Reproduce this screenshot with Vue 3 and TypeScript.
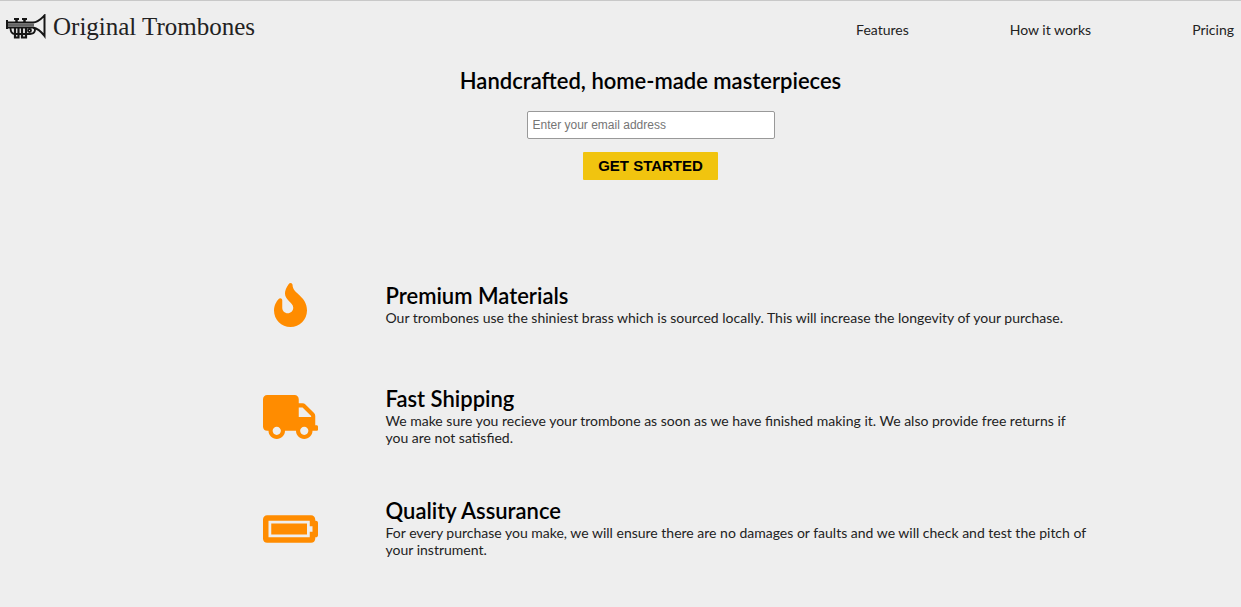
<script setup lang="ts">
import { ref } from 'vue'

interface Feature {
  title: string
  text: string
  viewBox: string
  path: string
}

const email = ref('')

const links: { label: string; href: string }[] = [
  { label: 'Features', href: '#features' },
  { label: 'How it works', href: '#how-it-works' },
  { label: 'Pricing', href: '#pricing' },
]

const features: Feature[] = [
  {
    title: 'Premium Materials',
    text: 'Our trombones use the shiniest brass which is sourced locally. This will increase the longevity of your purchase.',
    viewBox: '0 0 384 512',
    path: 'M216 23.86c0-23.8-30.65-32.77-44.15-13.04C48 191.85 224 200 224 288c0 35.63-29.11 64.46-64.85 63.99-35.17-.45-63.15-29.77-63.15-64.94v-85.51c0-21.7-26.47-32.23-41.43-16.5C27.8 213.16 0 261.33 0 320c0 105.87 86.13 192 192 192s192-86.13 192-192c0-170.29-168-193-168-296.14z',
  },
  {
    title: 'Fast Shipping',
    text: 'We make sure you recieve your trombone as soon as we have finished making it. We also provide free returns if you are not satisfied.',
    viewBox: '0 0 640 512',
    path: 'M624 352h-16V243.9c0-12.7-5.1-24.9-14.1-33.9L494 110.1c-9-9-21.2-14.1-33.9-14.1H416V48c0-26.5-21.5-48-48-48H48C21.5 0 0 21.5 0 48v320c0 26.5 21.5 48 48 48h16c0 53 43 96 96 96s96-43 96-96h128c0 53 43 96 96 96s96-43 96-96h48c8.8 0 16-7.2 16-16v-32c0-8.8-7.2-16-16-16zM160 464c-26.5 0-48-21.5-48-48s21.5-48 48-48 48 21.5 48 48-21.5 48-48 48zm320 0c-26.5 0-48-21.5-48-48s21.5-48 48-48 48 21.5 48 48-21.5 48-48 48zm80-208H416V144h44.1l99.9 99.9V256z',
  },
  {
    title: 'Quality Assurance',
    text: 'For every purchase you make, we will ensure there are no damages or faults and we will check and test the pitch of your instrument.',
    viewBox: '0 0 640 512',
    path: 'M544 160v64h32v64h-32v64H64V160h480m16-64H48c-26.51 0-48 21.49-48 48v224c0 26.51 21.49 48 48 48h512c26.51 0 48-21.49 48-48v-16h8c13.255 0 24-10.745 24-24V184c0-13.255-10.745-24-24-24h-8v-16c0-26.51-21.49-48-48-48zm-48 96H96v128h416V192z',
  },
]
</script>

<template>
  <div class="page">
    <header class="header">
      <a class="brand" href="#">
        <svg class="brand-icon" viewBox="0 0 40 26" aria-hidden="true">
          <g fill="none" stroke="#161616" stroke-width="1.8">
            <path d="M1 6v9" stroke-width="2" />
            <path d="M2 8.5h25c5 0 8-3.500 11.500-7v20.500c-3-4-6-7.500-11.500-8.500H2" stroke-width="2" />
            <path d="M2 11h26" stroke="#666" stroke-width="3" />
            <path d="M4.500 14c0 3.500 1.500 6 4.500 6h15c5.500 0 6-5 3.500-6.500" />
            <path d="M10.500 5v4M18.500 5v4" stroke-width="2.500" />
            <path d="M8 5h5M16 5h5" stroke-width="2" />
            <path d="M9 14v9.500h3.500V14M16 14v9.500h4V14" stroke-width="2.200" />
            <circle cx="23.500" cy="16.500" r="1.500" />
          </g>
        </svg>
        <span class="brand-name">Original Trombones</span>
      </a>
      <nav class="nav">
        <a v-for="link in links" :key="link.href" class="nav-link" :href="link.href">{{ link.label }}</a>
      </nav>
    </header>

    <main class="main">
      <section class="hero">
        <h1 class="title">Handcrafted, home-made masterpieces</h1>
        <form class="form" @submit.prevent>
          <input v-model="email" class="email" type="email" aria-label="Email address" placeholder="Enter your email address" />
          <button class="submit" type="submit">GET STARTED</button>
        </form>
      </section>

      <section id="features" class="features">
        <article v-for="feature in features" :key="feature.title" class="feature">
          <div class="feature-icon">
            <svg :viewBox="feature.viewBox" height="44" aria-hidden="true">
              <path :d="feature.path" fill="#ff8c00" />
            </svg>
          </div>
          <div class="feature-body">
            <h2 class="title">{{ feature.title }}</h2>
            <p class="text">{{ feature.text }}</p>
          </div>
        </article>
      </section>
    </main>
  </div>
</template>

<style>
body {
  margin: 0;
  background: #eee;
}
</style>

<style scoped>
.page {
  box-sizing: border-box;
  min-height: 100vh;
  border-top: 1px solid #c8c8c8;
  background: #eee;
  color: #222;
  font: 14px/17px Lato, sans-serif;
}

.header {
  display: flex;
  align-items: center;
  justify-content: space-between;
  padding: 8px 7px 0 6px;
}

.brand {
  display: flex;
  align-items: center;
  gap: 7px;
  color: #222;
  text-decoration: none;
}

.brand-icon {
  width: 40px;
  height: 26px;
}

.brand-name {
  font: 25px/36px "Liberation Serif", serif;
}

.nav {
  display: flex;
  gap: 101px;
  padding-top: 4px;
}

.nav-link {
  color: #222;
  text-decoration: none;
}

.main {
  padding-left: 60px;
}

.title {
  margin: 0;
  color: #000;
  font-size: 22px;
  font-weight: 600;
  line-height: 27px;
}

.hero {
  display: flex;
  flex-direction: column;
  align-items: center;
  padding-top: 22px;
}

.form {
  display: flex;
  flex-direction: column;
  align-items: center;
  gap: 13px;
  padding-top: 17px;
}

.email {
  box-sizing: border-box;
  width: 248px;
  height: 28px;
  padding: 0 5px;
  border: 1px solid #999;
  border-radius: 2px;
  background: #fff;
  font: 12px "Liberation Sans", Arial, sans-serif;
}

.email::placeholder {
  color: #757575;
}

.submit {
  padding: 0 15px;
  border: 0;
  border-radius: 1px;
  background: #f1c40f;
  color: #000;
  font: 900 15px/28px "Liberation Sans", Arial, sans-serif;
}

.features {
  display: flex;
  flex-direction: column;
  gap: 49px;
  max-width: 910px;
  margin: 0 auto;
  padding-top: 93px;
}

.feature {
  display: grid;
  grid-template-columns: 190px 1fr;
  align-items: center;
  min-height: 63px;
}

.feature-icon {
  display: flex;
  justify-content: center;
}

.feature-body {
  padding: 0 16px 2px 0;
}

.text {
  margin: 0;
}
</style>
